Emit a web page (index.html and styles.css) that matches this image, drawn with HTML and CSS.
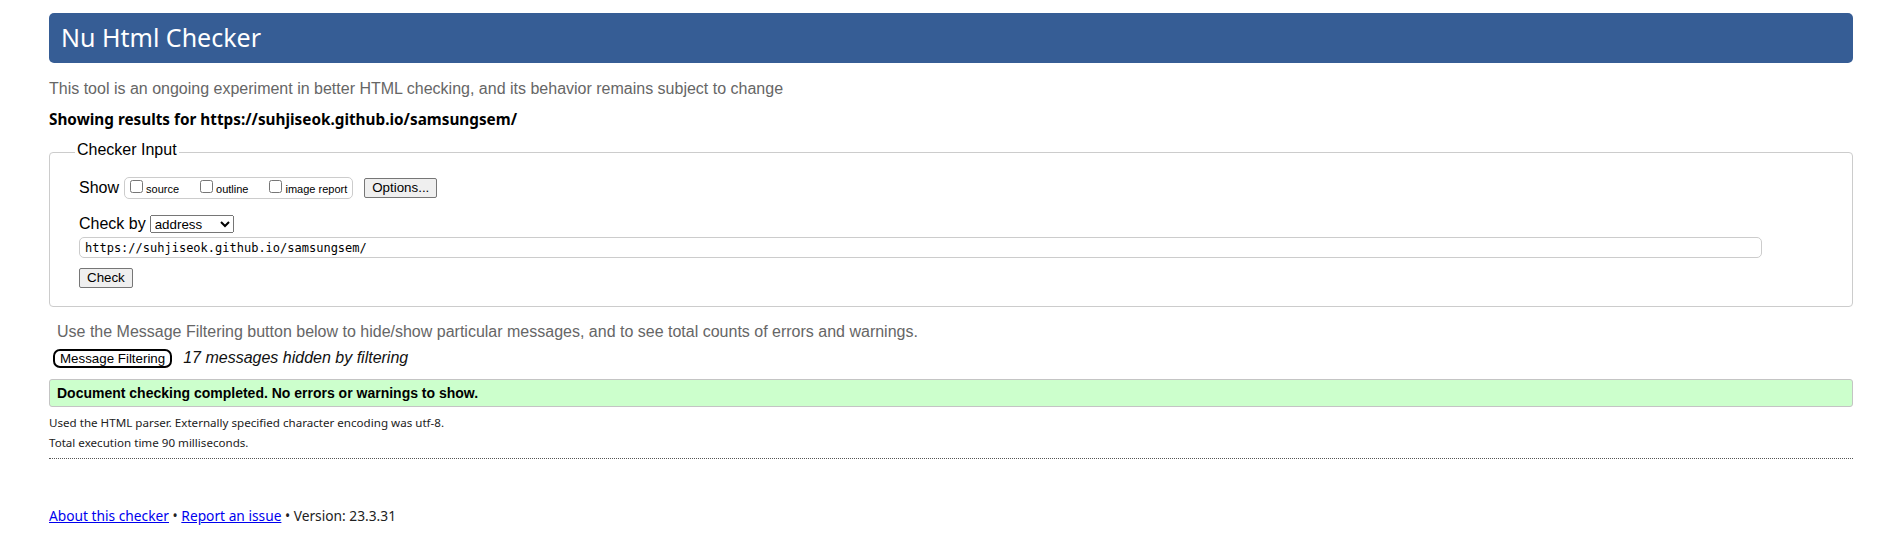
FILE: index.html
```html
<!DOCTYPE html>
<html lang="en">
<head>
<meta charset="utf-8">
<title>Showing results for https://suhjiseok.github.io/samsungsem/ - Nu Html Checker</title>
<link rel="stylesheet" href="styles.css">
</head>
<body>
<h1 class="title">Nu Html Checker</h1>
<p class="intro">This tool is an ongoing experiment in better HTML checking, and its behavior remains subject to change</p>
<p class="showing">Showing results for https://suhjiseok.github.io/samsungsem/</p>
<form class="checker-form">
  <fieldset class="checker-input">
    <legend class="checker-legend">Checker Input</legend>
    <div class="row row-show">
      <span class="row-label">Show</span>
      <span class="show-opts">
        <label class="opt"><input type="checkbox" class="cb"><span class="opt-text">source</span></label>
        <label class="opt"><input type="checkbox" class="cb"><span class="opt-text">outline</span></label>
        <label class="opt"><input type="checkbox" class="cb"><span class="opt-text">image report</span></label>
      </span>
      <button type="button" class="btn btn-options">Options...</button>
    </div>
    <div class="row row-by">
      <span class="row-label">Check by</span>
      <select class="by-select">
        <option>address</option>
        <option>file upload</option>
        <option>text input</option>
      </select>
    </div>
    <input class="url" type="url" value="https://suhjiseok.github.io/samsungsem/">
    <div class="row row-check">
      <button type="button" class="btn">Check</button>
    </div>
  </fieldset>
</form>
<p class="filter-note">Use the Message Filtering button below to hide/show particular messages, and to see total counts of errors and warnings.</p>
<div class="filter-row">
  <button type="button" class="mf-btn">Message Filtering</button>
  <em class="hidden-count">17 messages hidden by filtering</em>
</div>
<div class="success">Document checking completed. No errors or warnings to show.</div>
<p class="details">Used the HTML parser. Externally specified character encoding was utf-8.<br>Total execution time 90 milliseconds.</p>
<hr class="dots">
<p class="footer"><a href="#">About this checker</a> &bull; <a href="#">Report an issue</a> &bull; Version: 23.3.31</p>
</body>
</html>
```
FILE: styles.css
```css
html, body {
  background: #fff;
}
body {
  margin: 0;
  padding: 13px 25px 0 49px;
  font-family: "Liberation Sans", Arial, sans-serif;
  font-size: 16px;
  color: #000;
}
.title {
  margin: 0;
  height: 50px;
  box-sizing: border-box;
  padding-left: 12px;
  background: #365d95;
  border-radius: 5px;
  color: #fff;
  font-family: "Noto Sans", sans-serif;
  font-weight: normal;
  font-size: 25px;
  line-height: 48px;
}
.intro {
  margin: 16px 0 0;
  line-height: 20px;
  color: #666;
}
.showing {
  margin: 10px 0 0;
  line-height: 20px;
  font-family: "Noto Sans", sans-serif;
  font-weight: bold;
  font-size: 15.3px;
}
.checker-form {
  margin: 13px 0 0;
}
.checker-input {
  margin: 0;
  padding: 15px 0 18px 29px;
  border: 1px solid #ccc;
  border-radius: 4px;
  min-width: 0;
}
.checker-legend {
  margin-left: -4px;
  padding: 0 2px 4px;
  font-size: 16px;
  line-height: 16px;
}
.row {
  display: flex;
  align-items: center;
}
.row-show {
  height: 22px;
}
.row-label {
  line-height: 20px;
}
.show-opts {
  display: flex;
  align-items: center;
  box-sizing: border-box;
  height: 22px;
  margin-left: 5px;
  padding: 0 5px 0 1px;
  border: 1px solid #ccc;
  border-radius: 5px;
}
.opt {
  display: flex;
  align-items: center;
  margin-right: 17px;
}
.opt:last-child {
  margin-right: 0;
}
.cb {
  width: 13px;
  height: 13px;
  margin: 0 3px 3px 4px;
}
.opt-text {
  font-size: 11px;
  line-height: 13px;
  padding-top: 2px;
}
.btn {
  box-sizing: border-box;
  height: 20px;
  padding: 0 7px;
  border: 1px solid #767676;
  border-radius: 2px;
  background: #efefef;
  color: #000;
  font-family: "Liberation Sans", Arial, sans-serif;
  font-size: 13.333px;
  line-height: 18px;
}
.btn-options {
  margin-left: 11px;
}
.row-by {
  height: 20px;
  margin-top: 15px;
  gap: 4px;
}
.by-select {
  box-sizing: border-box;
  width: 84px;
  height: 18px;
  font-family: "Liberation Sans", Arial, sans-serif;
  font-size: 13.333px;
}
.url {
  display: block;
  box-sizing: border-box;
  width: calc(100% - 90px);
  height: 21px;
  margin: 3px 0 0;
  padding: 0 5px;
  border: 1px solid #ccc;
  border-radius: 5px;
  font-family: "DejaVu Sans Mono", monospace;
  font-size: 12px;
  color: #000;
}
.row-check {
  height: 20px;
  margin-top: 10px;
}
.filter-note {
  margin: 15px 0 0 8px;
  line-height: 20px;
  color: #666;
}
.filter-row {
  display: flex;
  align-items: baseline;
  height: 21px;
  margin-top: 6px;
}
.mf-btn {
  box-sizing: border-box;
  height: 19px;
  margin-left: 4px;
  padding: 0 5px;
  border: 2px solid #000;
  border-radius: 7px;
  background: #fff;
  color: #000;
  font-family: "Liberation Sans", Arial, sans-serif;
  font-size: 13.333px;
  line-height: 15px;
}
.hidden-count {
  margin-left: 11px;
  line-height: 20px;
  font-style: italic;
  color: #111;
}
.success {
  box-sizing: border-box;
  height: 28px;
  margin-top: 10px;
  padding-left: 7px;
  border: 1px solid #c4c4c4;
  border-radius: 3px;
  background: #ccffcc;
  font-weight: bold;
  font-size: 14px;
  line-height: 26px;
}
.details {
  margin: 6px 0 0;
  font-family: "Noto Sans", sans-serif;
  font-size: 11.6px;
  line-height: 20px;
  color: #222;
}
.dots {
  margin: 5px 0 0;
  height: 0;
  border: 0;
  border-top: 1px dotted #555;
}
.footer {
  margin: 47px 0 0;
  font-family: "Noto Sans", sans-serif;
  font-size: 13.75px;
  line-height: 20px;
  color: #222;
}
.footer a {
  color: #0000ee;
}
```
